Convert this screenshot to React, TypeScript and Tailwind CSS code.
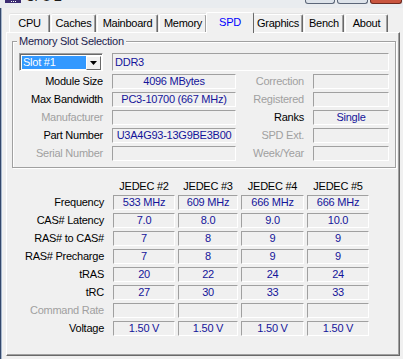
import React from "react";

const tabs: { name: string; w: string }[] = [
  { name: "CPU", w: "w-[41px]" },
  { name: "Caches", w: "w-[45px]" },
  { name: "Mainboard", w: "w-[61px]" },
  { name: "Memory", w: "w-[48px]" },
  { name: "SPD", w: "w-[44px]" },
  { name: "Graphics", w: "w-[50px]" },
  { name: "Bench", w: "w-[40px]" },
  { name: "About", w: "w-[43px]" },
];

const slotRows: [string, boolean, string, string, boolean, string][] = [
  ["Module Size", false, "4096 MBytes", "Correction", true, ""],
  ["Max Bandwidth", false, "PC3-10700 (667 MHz)", "Registered", true, ""],
  ["Manufacturer", true, "", "Ranks", false, "Single"],
  ["Part Number", false, "U3A4G93-13G9BE3B00", "SPD Ext.", true, ""],
  ["Serial Number", true, "", "Week/Year", true, ""],
];

const timings: { label: string; disabled?: boolean; values: string[] }[] = [
  { label: "Frequency", values: ["533 MHz", "609 MHz", "666 MHz", "666 MHz"] },
  { label: "CAS# Latency", values: ["7.0", "8.0", "9.0", "10.0"] },
  { label: "RAS# to CAS#", values: ["7", "8", "9", "9"] },
  { label: "RAS# Precharge", values: ["7", "8", "9", "9"] },
  { label: "tRAS", values: ["20", "22", "24", "24"] },
  { label: "tRC", values: ["27", "30", "33", "33"] },
  { label: "Command Rate", disabled: true, values: ["", "", "", ""] },
  { label: "Voltage", values: ["1.50 V", "1.50 V", "1.50 V", "1.50 V"] },
];

function Label({ children, disabled, pad }: { children?: React.ReactNode; disabled?: boolean; pad?: boolean }) {
  return (
    <div className={`text-right leading-[15px] whitespace-nowrap ${pad ? "pr-[6px]" : ""} ${disabled ? "text-[#a0a0a0]" : "text-black"}`}>
      {children}
    </div>
  );
}

function Field({ children, left, tall }: { children?: React.ReactNode; left?: boolean; tall?: boolean }) {
  return (
    <div
      className={`${tall ? "h-[18px] leading-[16px]" : "h-[15px] leading-[13px]"} border border-t-[#a0a0a0] border-l-[#a0a0a0] border-b-white border-r-white text-[#14149a] whitespace-nowrap overflow-hidden ${left ? "pl-[2px] text-left" : "text-center"}`}
    >
      {children}
    </div>
  );
}

function SlotCombo() {
  return (
    <div className="h-[18px] flex p-[1px] bg-white border border-t-[#a0a0a0] border-l-[#a0a0a0] border-b-white border-r-white shadow-[inset_1px_1px_0_#696969]">
      <div className="flex-1 ml-[1px] mt-[1px] h-[13px] bg-[#3399ff] text-white leading-[13px] pl-[1px]">Slot #1</div>
      <div className="w-[15px] h-[14px] mt-[1px] flex items-center justify-center bg-[#f0f0f0] border border-t-white border-l-white border-b-[#696969] border-r-[#696969]">
        <svg width="7" height="4" viewBox="0 0 7 4">
          <path d="M0 0H7L3.5 4Z" fill="#000" />
        </svg>
      </div>
    </div>
  );
}

function TitleBar() {
  return (
    <div className="h-[8px] flex items-start bg-[#e9ecef] overflow-hidden">
      <div className="ml-[5px] w-[16px] h-[3px] bg-[#3b2c72] flex items-end justify-center gap-[1px] pb-[1px]">
        <div className="w-[1px] h-[1px] bg-white" />
        <div className="w-[1px] h-[1px] bg-white" />
        <div className="w-[1px] h-[1px] bg-white" />
      </div>
      <div className="ml-[5px] -mt-[9px] text-[12px] leading-[12px] text-[#1b1b1b]">CPU-Z</div>
      <div className="ml-auto mr-[1px] flex gap-[2px]">
        <div className="w-[30px] h-[4px] rounded-b-[3px] bg-[#dde3ea] border border-t-0 border-[#5b6678]" />
        <div className="w-[31px] h-[4px] rounded-b-[3px] bg-[#dde3ea] border border-t-0 border-[#5b6678]" />
        <div className="w-[32px] h-[4px] rounded-b-[3px] bg-[#c9553f] border border-t-0 border-[#6e2a20]" />
      </div>
    </div>
  );
}

export default function App() {
  return (
    <div className="w-[403px] h-[359px] bg-[#f0f0f0] flex flex-col overflow-hidden font-['Liberation_Sans',Arial,sans-serif] text-[11px] tracking-[-0.25px] text-black">
      <TitleBar />
      <div className="flex-1 flex flex-col border-l border-[#34486c] shadow-[inset_1px_0_0_#a7b7cc]">
        {/* tab strip */}
        <div className="mt-[4px] h-[20px] flex items-end gap-[1px] pl-[8px]">
          {tabs.map((t) =>
            t.name === "SPD" ? (
              <div
                key={t.name}
                className="relative z-10 -mx-[2px] -mb-[1px] w-[48px] h-[21px] pb-[2px] flex items-center justify-center bg-[#f0f0f0] border-t border-l border-white border-r border-r-[#696969] rounded-t-[2px] text-[#0000ff]"
              >
                {t.name}
              </div>
            ) : (
              <div
                key={t.name}
                className={`${t.w} h-[18px] flex items-center justify-center border-t border-l border-white border-r border-r-[#696969] shadow-[inset_-1px_0_0_#a0a0a0,0_-1px_0_#e3e3e3] rounded-t-[2px]`}
              >
                {t.name}
              </div>
            )
          )}
        </div>

        {/* tab page */}
        <div className="ml-[5px] w-[394px] h-[324px] flex flex-col border-t border-l border-white border-r border-b border-r-[#696969] border-b-[#696969] shadow-[inset_-1px_-1px_0_#a0a0a0]">
          {/* Memory Slot Selection */}
          <div className="mt-[8px] ml-[5px] w-[384px] border border-[#a0a0a0] shadow-[inset_1px_1px_0_#fff,1px_1px_0_#fff] pb-[6px]">
            <div className="-mt-[7px] ml-[4px] px-[2px] w-fit bg-[#f0f0f0] leading-[13px] text-[#1c1c4e]">
              Memory Slot Selection
            </div>
            <div className="mt-[5px] pl-[6px] grid grid-cols-[84px_124px_59px_76px] gap-x-[9px] gap-y-[3px]">
              <SlotCombo />
              <div className="col-span-3">
                <Field left tall>
                  DDR3
                </Field>
              </div>
              {slotRows.map((r) => (
                <React.Fragment key={r[0]}>
                  <Label disabled={r[1]}>{r[0]}</Label>
                  <Field>{r[2]}</Field>
                  <Label disabled={r[4]}>{r[3]}</Label>
                  <Field>{r[5]}</Field>
                </React.Fragment>
              ))}
            </div>
          </div>

          {/* timings table */}
          <div className="mt-[12px] pl-[13px] grid grid-cols-[90px_62px_60px_63px_62px] gap-x-[3px] gap-y-[3px]">
            <div />
            {["JEDEC #2", "JEDEC #3", "JEDEC #4", "JEDEC #5"].map((h) => (
              <div key={h} className="text-center leading-[13px] -mb-[1px]">
                {h}
              </div>
            ))}
            {timings.map((row) => (
              <React.Fragment key={row.label}>
                <Label pad disabled={row.disabled}>
                  {row.label}
                </Label>
                {row.values.map((v, i) => (
                  <Field key={i}>{v}</Field>
                ))}
              </React.Fragment>
            ))}
          </div>
        </div>
      </div>
    </div>
  );
}
